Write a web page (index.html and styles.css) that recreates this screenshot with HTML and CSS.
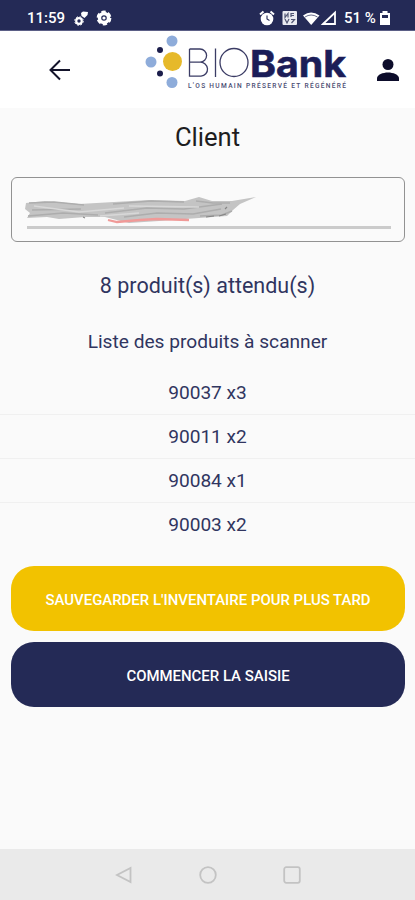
FILE: index.html
```html
<!DOCTYPE html>
<html lang="fr">
<head>
    <meta charset="UTF-8">
    <meta name="viewport" content="width=device-width, initial-scale=1.0">
    <title>BIOBank - Inventaire</title>
    <link rel="stylesheet" href="styles.css">
</head>
<body>
    <div class="status-bar">
        <span class="time">11:59</span>
        <svg class="status-left" width="42" height="18" viewBox="0 0 42 18">
            <circle cx="6" cy="12" r="2.800" fill="none" stroke="#fff" stroke-width="2.2"/>
            <circle cx="6" cy="12" r="4.3" fill="none" stroke="#fff" stroke-width="1" stroke-dasharray="1.7 1.7"/>
            <path d="M8 4l2-1.500 5 .5-.5 3-3 3-3-2z" fill="#fff"/>
            <circle cx="31" cy="9" r="4.500" fill="none" stroke="#fff" stroke-width="3.400"/>
            <circle cx="31" cy="9" r="6.200" fill="none" stroke="#fff" stroke-width="2.400" stroke-dasharray="4.200 2.290"/>
            <circle cx="31" cy="9" r="1.600" fill="#fff"/>
        </svg>
        <svg class="status-right" width="82" height="18" viewBox="0 0 82 18">
            <!-- alarm -->
            <circle cx="9" cy="10" r="6.300" fill="#fff"/>
            <path d="M2 5.500l3.500-3M16 5.500l-3.500-3" stroke="#fff" stroke-width="2"/>
            <path d="M9 6.500V10l2.500 1.500" fill="none" stroke="#242a56" stroke-width="1.100"/>
            <!-- nfc / volte -->
            <rect x="24.500" y="2" width="14.500" height="14" rx="1" fill="#e9eaf1"/>
            <path d="M27 4.500v4l3-4v4M33 8V4.500h3M33 6.500h3M27 10l2 4 2-4M33 10.500h3.500l-3 3.500" fill="none" stroke="#515674" stroke-width="1.200"/>
            <!-- wifi -->
            <path d="M45 6.500Q53 .5 61.500 6.500L53.200 16z" fill="#fff"/>
            <path d="M47 8Q53 4 59.500 8" fill="none" stroke="#242a56" stroke-width=".7"/>
            <!-- signal -->
            <path d="M65 15L77 3.500V15z" fill="none" stroke="#fff" stroke-width="1.800"/>
        </svg>
        <span class="battery-text">51 %</span>
        <svg width="12" height="16" viewBox="0 0 12 16">
            <path d="M3.500 1h5v2H11v12H1V3h2.500z" fill="#fff"/>
            <path d="M3 5h6v3H3z" fill="#242a56"/>
        </svg>
    </div>

    <header class="header">
        <svg class="back" width="24" height="24" viewBox="0 0 24 24">
            <path d="M22 12H3M12 2.500L2.500 12l9.500 9.500" fill="none" stroke="#14142b" stroke-width="2"/>
        </svg>
        <svg class="logo" width="206" height="60" viewBox="0 0 206 60">
            <circle cx="27" cy="8" r="5.500" fill="#8eacda"/>
            <circle cx="6" cy="29" r="5.500" fill="#8eacda"/>
            <circle cx="27" cy="49.500" r="5.500" fill="#8eacda"/>
            <circle cx="15" cy="17" r="3" fill="#1b1d4b"/>
            <circle cx="15" cy="40.500" r="3" fill="#1b1d4b"/>
            <circle cx="27.500" cy="28.500" r="9.500" fill="#e6b92a"/>
            <g class="logo-thin">
                <path d="M44.500 16H55a6.400 6.400 0 0 1 0 13.200H44.500M55 29.200a7 7 0 0 1 1 14H44.500V16"/>
                <path d="M70.500 15.500V44"/>
                <circle cx="89" cy="29.500" r="14"/>
            </g>
            <text class="logo-bold" x="105" y="43.500" textLength="96" lengthAdjust="spacingAndGlyphs">Bank</text>
            <text class="logo-tagline" x="43" y="55" textLength="158">L'OS HUMAIN PRÉSERVÉ ET RÉGÉNÉRÉ</text>
        </svg>
        <svg class="user" width="24" height="24" viewBox="0 0 24 24">
            <circle cx="12" cy="6.500" r="5.500" fill="#0d0d2b"/>
            <path d="M1 23v-2.500C1 16.500 7 14.500 12 14.500s11 2 11 6V23z" fill="#0d0d2b"/>
        </svg>
    </header>

    <main class="content">
        <h1>Client</h1>
        <div class="client-field">
            <svg class="scribble" width="240" height="32" viewBox="0 0 240 32">
                <defs>
                    <filter id="soft" x="-5%" y="-20%" width="110%" height="140%">
                        <feGaussianBlur stdDeviation="0.7"/>
                    </filter>
                </defs>
                <g filter="url(#soft)">
                    <path d="M3 7L22 5l34 3 35-2 35-2 36 1 14-4 13 4 20 0 24-4-16 7-7 6-6 6-28 2-40 3-30 2-24-6-20 0-26 2-12-2-20 1 3-5-5-4z" fill="#c4c4c4"/>
                    <g fill="none" stroke="#adadad">
                        <path d="M6 7L31 6l30 3M9 14l49-1M5 20l35-3 35 2M90 8l38-3 33 1M82 17l42-5 37 1 38-5" stroke-width="1.500"/>
                        <path d="M101 21l33-4 36 1 28-5M177 20l22-1 10-4M173 5l17 2 17 0" stroke-width="1.600"/>
                    </g>
                    <path d="M11 10l45 6 45-4M106 10l70 1M77 20l39-3" fill="none" stroke="#d8d8d8" stroke-width="1.500"/>
                </g>
                <path d="M183 21l8-1M196 20l7-2M202 13l2-2M60 21l2 1" fill="none" stroke="#858585" stroke-width="1.100"/>
                <path d="M85 24l9 2 23-2 17-1 32 1" fill="none" stroke="#f09a98" stroke-width="2.300"/>
            </svg>
            <div class="underline"></div>
        </div>

        <h2>8 produit(s) attendu(s)</h2>
        <h3>Liste des produits à scanner</h3>
        <ul class="products">
            <li>90037 x3</li>
            <li>90011 x2</li>
            <li>90084 x1</li>
            <li>90003 x2</li>
        </ul>

        <button class="btn btn-save"><span>SAUVEGARDER L'INVENTAIRE POUR PLUS TARD</span></button>
        <button class="btn btn-start"><span>COMMENCER LA SAISIE</span></button>
    </main>

    <nav class="nav-bar">
        <svg width="18" height="18" viewBox="0 0 18 18">
            <path d="M15.500 2v14L2 9z"/>
        </svg>
        <svg width="18" height="18" viewBox="0 0 18 18">
            <circle cx="9" cy="9" r="7.800"/>
        </svg>
        <svg width="18" height="18" viewBox="0 0 18 18">
            <rect x="1.200" y="1.200" width="15.600" height="15.600" rx="2"/>
        </svg>
    </nav>
</body>
</html>
```

FILE: styles.css
```css
* {
    box-sizing: border-box;
}
body {
    margin: 0;
    height: 900px;
    display: flex;
    flex-direction: column;
    font-family: Roboto, sans-serif;
    background-color: #fafafa;
    color: #30355f;
}
svg {
    display: block;
    flex: none;
}
/* Phone status bar */
.status-bar {
    height: 31px;
    padding: 5px 24px 0 27px;
    display: flex;
    align-items: center;
    background-color: #242a56;
    border-bottom: 1px solid #5b5f86;
    color: #fff;
    font-size: 15px;
    font-weight: 500;
}
.time {
    width: 46px;
}
.status-right {
    margin-left: auto;
}
.battery-text {
    width: 34px;
    margin: 0 1px 0 4px;
    white-space: nowrap;
}
/* App header with the logo */
.header {
    height: 77px;
    padding: 0 15px 0 48px;
    display: flex;
    align-items: center;
    background-color: #fff;
}
.logo {
    margin: -13px 0 0 73px;
}
.user {
    margin-left: auto;
}
.logo-thin {
    fill: none;
    stroke: #3b3c65;
    stroke-width: 1.3;
}
.logo-bold {
    font-family: Inter, sans-serif;
    font-size: 37px;
    font-weight: 700;
    fill: #1b1d58;
    stroke: #1b1d58;
    stroke-width: 0.6;
}
.logo-tagline {
    font-size: 6.6px;
    font-weight: 500;
    fill: #4a4c72;
}
/* Page content */
.content {
    flex: 1;
    display: flex;
    flex-direction: column;
    text-align: center;
}
h1, h2, h3 {
    margin: 0;
    font-weight: 400;
}
h1 {
    margin-top: 14px;
    font-size: 25.6px;
    line-height: 30px;
    color: #1d1d20;
}
.client-field {
    height: 65px;
    margin: 25px 10px 0 11px;
    padding: 18px 13px 0 11px;
    border: 1px solid #929292;
    border-radius: 6px;
}
.underline {
    height: 3px;
    margin: -2px 0 0 4px;
    background-color: #cbcbcb;
}
h2 {
    margin-top: 31px;
    font-size: 21.5px;
    line-height: 26px;
}
h3 {
    margin-top: 32px;
    font-size: 19.15px;
    line-height: 22px;
}
.products {
    margin: 18px 0 0;
    padding: 0;
    list-style: none;
}
.products li {
    height: 44px;
    border-bottom: 1px solid #f0f0f0;
    font-size: 19.1px;
    line-height: 44px;
}
.products li:last-child {
    border-bottom: none;
}
.btn {
    height: 65px;
    margin: 0 10px 0 11px;
    padding: 2px 0 0;
    border: none;
    border-radius: 23px;
    color: #fff;
    font-family: inherit;
    font-size: 14.95px;
    font-weight: 500;
}
.btn-save {
    margin-top: 19px;
    background-color: #f2c200;
}
.btn-start {
    margin-top: 11px;
    background-color: #242a56;
}
/* Android navigation buttons */
.nav-bar {
    height: 51px;
    display: flex;
    justify-content: center;
    align-items: center;
    gap: 66px;
    background-color: #eaeaea;
    fill: none;
    stroke: #c3c3c3;
    stroke-width: 1.8;
}
```
